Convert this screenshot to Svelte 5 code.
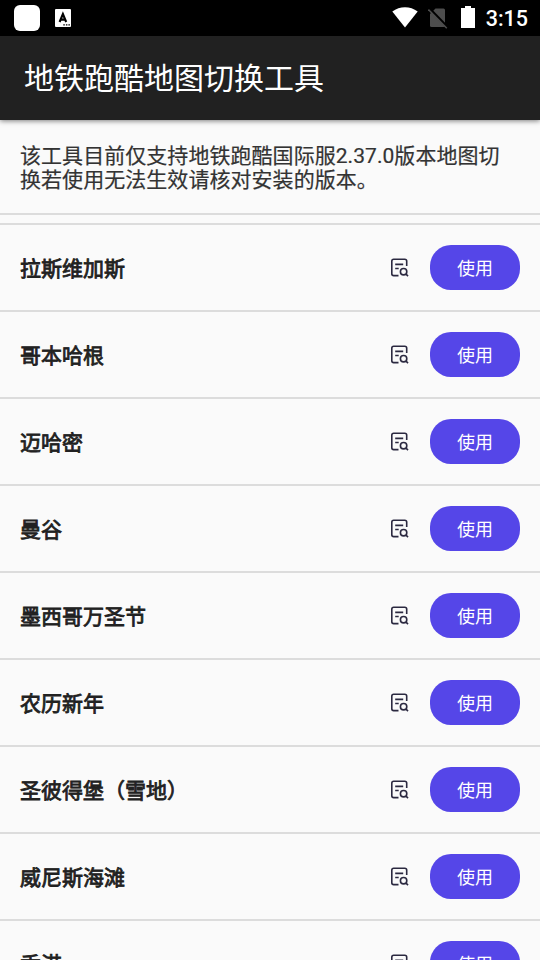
<script lang="ts">
  interface City {
    id: number;
    name: string;
  }

  const title = '地铁跑酷地图切换工具';

  const cities: City[] = [
    { id: 1, name: '拉斯维加斯' },
    { id: 2, name: '哥本哈根' },
    { id: 3, name: '迈哈密' },
    { id: 4, name: '曼谷' },
    { id: 5, name: '墨西哥万圣节' },
    { id: 6, name: '农历新年' },
    { id: 7, name: '圣彼得堡（雪地）' },
    { id: 8, name: '威尼斯海滩' },
    { id: 9, name: '香港' }
  ];
</script>

<div class="screen">

  <div class="status-bar">
    <div class="status-left">
      <div class="app-badge"></div>
      <svg class="keyboard-icon" width="16" height="18" viewBox="0 0 16 18">
        <rect width="16" height="18" rx="1" fill="#fff" />
        <path d="M4.6 13 7.9 5 11.2 13M5.7 10.6h4.4" fill="none" stroke="#000" stroke-width="2.1" />
        <path d="M8.3 15.2h1.5v1.4H8.3zM10.9 15.2h1.5v1.4h-1.5zM13.4 15.2h1.5v1.4h-1.5z" fill="#000" />
      </svg>
    </div>

    <div class="status-right">
      <svg class="wifi" width="26" height="21" viewBox="0 0 26 21">
        <path d="M0.3 4.6C7.7-1.3 18.3-1.3 25.7 4.6L13 20.6z" fill="#fff" />
      </svg>
      <svg class="no-sim" width="20" height="21" viewBox="0 0 20 21">
        <path d="M7.5 0.5H15.5Q17 0.5 17 2V17.5Q17 19 15.5 19H3.5Q2 19 2 17.5V6z" fill="#4d4d4d" />
        <path d="M1.2 0.3 20 19.5" stroke="#000" stroke-width="2.6" />
        <path d="M0.4 1.5 18.8 20.3" stroke="#4d4d4d" stroke-width="1.5" />
      </svg>
      <svg class="battery" width="14" height="22" viewBox="0 0 14 22">
        <path d="M4 0h6v2h4v20H0V2h4z" fill="#fff" />
      </svg>
      <span class="clock">3:15</span>
    </div>
  </div>

  <header class="title-bar">
    <h1>{title}</h1>
  </header>

  <p class="notice">该工具目前仅支持地铁跑酷国际服2.37.0版本地图切换若使用无法生效请核对安装的版本。</p>

  <ul class="city-list">
    {#each cities as city (city.id)}
      <li class="city">
        <span class="city-name">{city.name}</span>
        <button class="detail-bttn" aria-label="查看">
          <svg width="20" height="20" viewBox="0 0 20 20" fill="none" stroke="#2b2940" stroke-width="1.6">
            <path d="M8.5 17.6H3.7Q1.8 17.6 1.8 15.7V3.2Q1.8 1.3 3.7 1.3H14.8Q16.7 1.3 16.7 3.2V8" />
            <path d="M5.2 6.4H13.2M5.2 10.5H8.7" />
            <circle cx="13.6" cy="13.7" r="3.2" />
            <path d="M15.8 15.9 18 18.1" />
          </svg>
        </button>
        <button class="use-bttn">使用</button>
      </li>
    {/each}
  </ul>

</div>

<style>
  :global(body) {
    background: #fafafa;
    overflow: hidden;
  }

  .screen {
    height: 960px;
    overflow: hidden;
    background: #fafafa;
    font-family: Roboto, "Noto Sans CJK SC", sans-serif;
  }

  .status-bar {
    display: flex;
    justify-content: space-between;
    height: 36px;
    background: #000;
  }

  .status-left,
  .status-right {
    display: flex;
    align-items: center;
  }

  .app-badge {
    width: 26px;
    height: 26px;
    margin-left: 14px;
    border-radius: 6px;
    background: #fff;
  }

  .keyboard-icon {
    margin-left: 15px;
  }

  .status-right {
    padding-right: 12px;
  }

  .wifi {
    margin-bottom: 1px;
  }

  .no-sim {
    margin-left: 10px;
    margin-top: 1px;
  }

  .battery {
    margin-left: 13px;
    margin-bottom: 2px;
  }

  .clock {
    margin-left: 11px;
    margin-top: 1px;
    color: #fff;
    font-size: 21.5px;
    font-weight: 500;
  }

  .title-bar {
    position: relative;
    display: flex;
    align-items: center;
    box-sizing: border-box;
    height: 84px;
    padding: 0 0 4px 24px;
    background: #212121;
    box-shadow: 0 1px 5px rgba(0, 0, 0, 0.5);
  }

  h1 {
    margin: 0;
    color: #fff;
    font-size: 30px;
    font-weight: 400;
  }

  .notice {
    box-sizing: border-box;
    height: 95px;
    margin: 0;
    padding: 24px 22px 0 20px;
    border-bottom: 2px solid #dcdcdc;
    color: #333;
    font-size: 21px;
    line-height: 24px;
    letter-spacing: 0.05px;
    word-break: break-all;
    -webkit-text-stroke: 0.2px #333;
  }

  .city-list {
    margin: 8px 0 0;
    padding: 0;
    border-top: 2px solid #dcdcdc;
    list-style: none;
  }

  .city {
    display: flex;
    align-items: center;
    height: 85px;
    padding: 0 20px;
    border-bottom: 2px solid #dcdcdc;
  }

  .city-name {
    flex: 1;
    padding-bottom: 2px;
    color: #212121;
    font-size: 21px;
    -webkit-text-stroke: 0.8px #212121;
  }

  .detail-bttn {
    display: flex;
    margin-right: 20px;
    padding: 0;
    border: none;
    background: none;
  }

  .use-bttn {
    width: 90px;
    height: 45px;
    padding: 0 0 2px;
    border: none;
    border-radius: 21px;
    background: #5546e8;
    color: #fff;
    font-family: inherit;
    font-size: 18px;
  }
</style>
